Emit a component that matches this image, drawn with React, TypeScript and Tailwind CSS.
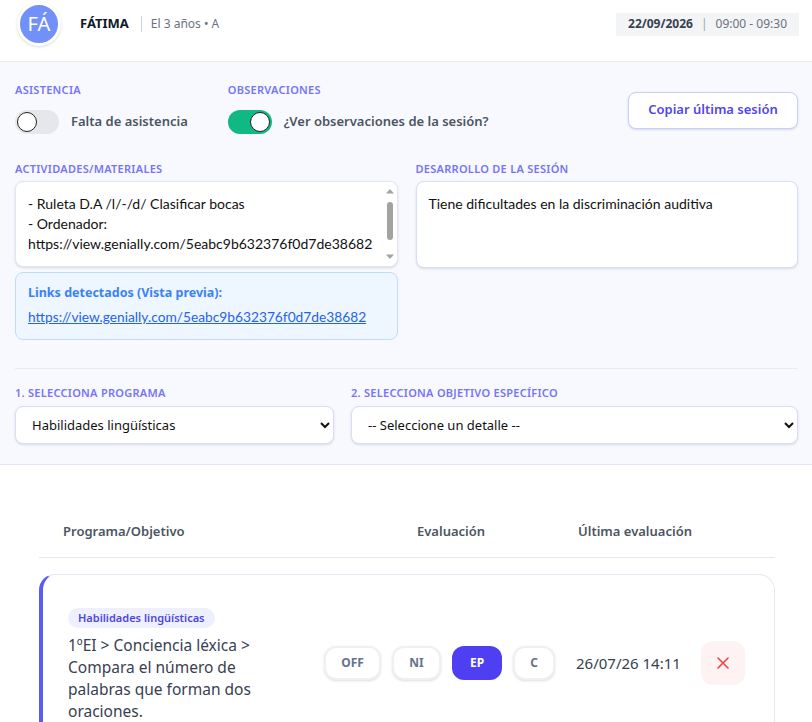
import { useState } from 'react';

const LABEL = 'text-[11px] font-semibold uppercase tracking-wide text-[#7575f5] leading-4';

function Toggle({ on, onChange }: { on: boolean; onChange: () => void }) {
  return (
    <button
      onClick={onChange}
      className={`relative h-6 w-11 flex-none rounded-full transition-colors ${on ? 'bg-[#10b981]' : 'bg-[#e5e7eb]'}`}
    >
      <span
        className={`absolute top-[2px] h-5 w-5 rounded-full border border-[#222] bg-white transition-all ${on ? 'left-[22px]' : 'left-[2px]'}`}
      />
    </button>
  );
}

// barra de scroll dibujada (el navegador headless no la pinta)
function FakeScrollbar() {
  return (
    <div className="pointer-events-none absolute right-[1px] top-[1px] bottom-[1px] flex w-[14px] flex-col items-center rounded-r-lg bg-white">
      <svg width="10" height="14" viewBox="0 0 10 14" className="mt-[2px]">
        <path d="M1 9.5L5 5l4 4.5z" fill="#a3a3a3" />
      </svg>
      <div className="mt-[4px] h-[38px] w-[6px] rounded-full bg-[#a3a3a3]" />
      <div className="flex-1" />
      <svg width="10" height="14" viewBox="0 0 10 14" className="mb-[2px]">
        <path d="M1 4.5L5 9l4-4.5z" fill="#a3a3a3" />
      </svg>
    </div>
  );
}

const EVALS = [
  { key: 'OFF', w: 'w-[57px]' },
  { key: 'NI', w: 'w-[49px]' },
  { key: 'EP', w: 'w-[50px]' },
  { key: 'C', w: 'w-[42px]' },
];

export default function App() {
  const [absent, setAbsent] = useState(false);
  const [showObs, setShowObs] = useState(true);
  const [evaluation, setEvaluation] = useState('EP');
  const [materials, setMaterials] = useState(
    '- Ruleta D.A /l/-/d/ Clasificar bocas\n- Ordenador:\nhttps://view.genially.com/5eabc9b632376f0d7de38682\n\n',
  );
  const [notes, setNotes] = useState('Tiene dificultades en la discriminación auditiva');

  return (
    <div className="min-h-screen bg-white text-[#1f2937] font-['Noto_Sans',sans-serif]">
      {/* cabecera */}
      <header className="h-[62px] border-b border-[#e8eaf0] bg-white pl-[17px] pr-[13px] pt-[2px]">
        <div className="flex h-11 items-center">
          <div className="flex h-11 w-11 flex-none items-center justify-center rounded-full border-[3px] border-white bg-[#7190f8] text-[20px] text-white shadow-[0_1px_3px_rgba(0,0,0,0.15)]">
            FÁ
          </div>
          <div className="ml-[19px] text-[13px] font-bold text-[#111827]">FÁTIMA</div>
          <div className="ml-3 h-4 w-px bg-[#d1d5db]" />
          <div className="ml-[9px] text-[12px] text-[#6b7280]">El 3 años • A</div>
          <div className="ml-auto flex h-[23px] items-center gap-2 bg-[#f3f4f6] px-3 text-[12px]">
            <span className="font-bold text-[#374151]">22/09/2026</span>
            <span className="text-[#9ca3af]">|</span>
            <span className="text-[#6b7280]">09:00 - 09:30</span>
          </div>
        </div>
      </header>

      {/* datos de sesión */}
      <section className="border-b border-[#e3e7f5] bg-[#f8f9fe] pl-[15px] pr-[14px] pt-5 pb-5">
        <div className="flex items-center">
          <div className="flex gap-10">
            <div>
              <div className={LABEL}>Asistencia</div>
              <div className="mt-3 flex items-center gap-3">
                <Toggle on={absent} onChange={() => setAbsent(!absent)} />
                <span className="text-[13px] font-semibold text-[#4b5563]">Falta de asistencia</span>
              </div>
            </div>
            <div>
              <div className={LABEL}>Observaciones</div>
              <div className="mt-3 flex items-center gap-3">
                <Toggle on={showObs} onChange={() => setShowObs(!showObs)} />
                <span className="text-[13px] font-semibold text-[#4b5563]">¿Ver observaciones de la sesión?</span>
              </div>
            </div>
          </div>
          <button className="ml-auto mt-1 h-[37px] w-[170px] rounded-lg border border-[#c7cffc] bg-white text-[13px] font-semibold text-[#5046ec] shadow-sm">
            Copiar última sesión
          </button>
        </div>

        <div className="mt-[27px] grid grid-cols-2 gap-[18px]">
          <div>
            <div className={LABEL}>Actividades/Materiales</div>
            <div className="relative mt-1">
              <textarea
                value={materials}
                onChange={(e) => setMaterials(e.target.value)}
                className="block h-[86px] w-full resize-none overflow-hidden rounded-lg border border-[#e2e5f3] bg-white py-[12px] pl-3 pr-5 font-['Lato',sans-serif] text-[14px] leading-5 text-[#111] shadow-sm outline-none"
              />
              <FakeScrollbar />
            </div>
            <div className="mt-[5px] rounded-lg border border-[#bfdbfe] bg-[#eef6ff] px-3 py-3">
              <div className="mb-1.5 text-[12.5px] font-bold leading-4 text-[#3b82f6]">Links detectados (Vista previa):</div>
              <a
                href="#"
                className="block font-['Lato',sans-serif] text-[13.75px] leading-5 text-[#2563eb] underline"
              >
                https://view.genially.com/5eabc9b632376f0d7de38682
              </a>
            </div>
          </div>
          <div>
            <div className={LABEL}>Desarrollo de la sesión</div>
            <textarea
              value={notes}
              onChange={(e) => setNotes(e.target.value)}
              className="mt-1 block h-[87px] w-full resize-none rounded-lg border border-[#d8ddf8] bg-white px-3 py-[12px] font-['Lato',sans-serif] text-[14px] leading-5 text-[#111] shadow-sm outline-none"
            />
          </div>
        </div>

        <div className="mt-7 border-t border-[#e8eaf3] pt-4">
          <div className="grid grid-cols-[319px_1fr] gap-[17px]">
            <div>
              <div className={LABEL}>1. Selecciona programa</div>
              <select className="mt-[5px] block h-[38px] w-full rounded-lg border border-[#d9ddf8] bg-white px-3 text-[13px] text-[#111] shadow-sm outline-none">
                <option>Habilidades lingüísticas</option>
              </select>
            </div>
            <div>
              <div className={LABEL}>2. Selecciona objetivo específico</div>
              <select className="mt-[5px] block h-[38px] w-full rounded-lg border border-[#d9ddf8] bg-white px-3 text-[13px] text-[#111] shadow-sm outline-none">
                <option>-- Seleccione un detalle --</option>
              </select>
            </div>
          </div>
        </div>
      </section>

      {/* tabla de objetivos */}
      <section className="ml-[39px] mr-[37px] pt-[56px]">
        <div className="flex border-b border-[#e5e7eb] pb-4 pl-6 text-[13px] font-semibold leading-5 text-[#4b5563]">
          <div className="w-[354px]">Programa/Objetivo</div>
          <div className="w-[161px]">Evaluación</div>
          <div>Última evaluación</div>
        </div>

        <div className="mt-4 flex items-center rounded-2xl border border-l-4 border-[#e3e7f1] border-l-[#5b5bf6] bg-white pb-8 pt-[29px] pl-[25px] pr-[29px]">
          <div className="w-[232px] flex-none">
            <span className="inline-block rounded-full bg-[#eef0fe] px-2.5 text-[11px] font-semibold leading-5 text-[#4f46e5]">
              Habilidades lingüísticas
            </span>
            <p className="mt-1.5 w-[210px] text-[15.5px] leading-[22px] text-[#374151]">
              1ºEI &gt; Conciencia léxica &gt; Compara el número de palabras que forman dos oraciones.
            </p>
          </div>
          <div className="ml-6 flex gap-[11px]">
            {EVALS.map((e) => (
              <button
                key={e.key}
                onClick={() => setEvaluation(e.key)}
                className={`h-[34px] ${e.w} rounded-xl text-[12px] font-bold ${
                  evaluation === e.key
                    ? 'bg-[#4f3ff2] text-white'
                    : 'border-2 border-[#eef0f5] bg-white text-[#64748b] shadow-sm'
                }`}
              >
                {e.key}
              </button>
            ))}
          </div>
          <div className="ml-[21px] w-[126px] text-[15px] text-[#374151]">26/07/26 14:11</div>
          <button className="flex h-11 w-11 items-center justify-center rounded-xl bg-[#fef2f2] text-[#ef4444]">
            <svg width="16" height="16" viewBox="0 0 16 16" fill="none" stroke="currentColor" strokeWidth="1.6" strokeLinecap="round">
              <path d="M3 3l10 10M13 3L3 13" />
            </svg>
          </button>
        </div>
      </section>
    </div>
  );
}
